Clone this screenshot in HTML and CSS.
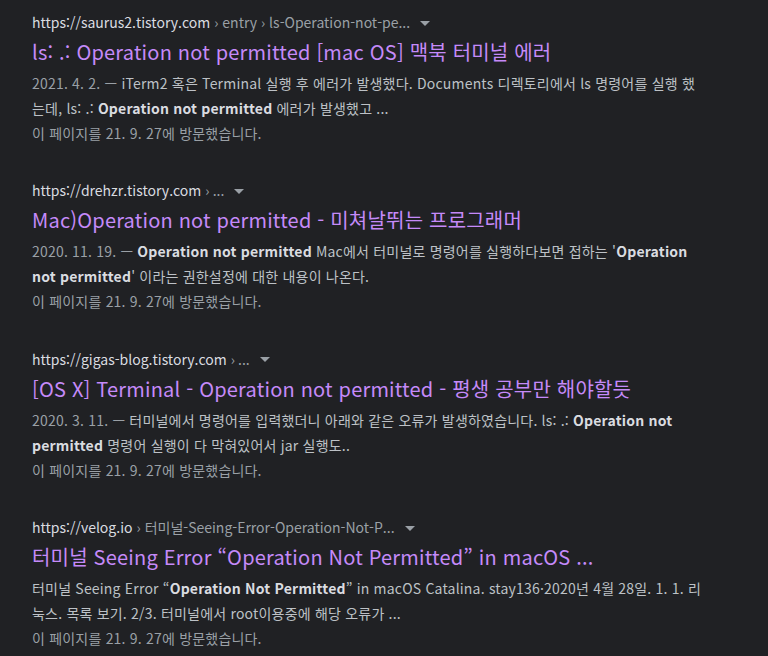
FILE: index.html
```html
<!DOCTYPE html>
<html lang="ko">
<head>
  <meta charset="UTF-8">
  <title>Operation not permitted - 검색 결과</title>
  <link rel="stylesheet" href="styles.css">
</head>
<body>
  <div class="results">

    <!-- 결과 1 -->
    <div class="result">
      <div class="cite">
        <span class="domain">https://saurus2.tistory.com</span>
        <span class="crumb">› entry › ls-Operation-not-pe...</span>
        <span class="caret"></span>
      </div>
      <a class="title" href="#">ls: .: Operation not permitted [mac OS] 맥북 터미널 에러</a>
      <div class="snippet">
        <span class="date">2021. 4. 2. — </span>iTerm2 혹은 Terminal 실행 후 에러가 발생했다. Documents 디렉토리에서 ls 명령어를 실행 했는데, ls: .: <b>Operation not permitted</b> 에러가 발생했고 ...
      </div>
      <div class="visited">이 페이지를 21. 9. 27에 방문했습니다.</div>
    </div>

    <!-- 결과 2 -->
    <div class="result">
      <div class="cite">
        <span class="domain">https://drehzr.tistory.com</span>
        <span class="crumb">› ...</span>
        <span class="caret"></span>
      </div>
      <a class="title" href="#">Mac)Operation not permitted - 미쳐날뛰는 프로그래머</a>
      <div class="snippet">
        <span class="date">2020. 11. 19. — </span><b>Operation not permitted</b> Mac에서 터미널로 명령어를 실행하다보면 접하는 '<b>Operation not permitted</b>' 이라는 권한설정에 대한 내용이 나온다.
      </div>
      <div class="visited">이 페이지를 21. 9. 27에 방문했습니다.</div>
    </div>

    <!-- 결과 3 -->
    <div class="result">
      <div class="cite">
        <span class="domain">https://gigas-blog.tistory.com</span>
        <span class="crumb">› ...</span>
        <span class="caret"></span>
      </div>
      <a class="title" href="#">[OS X] Terminal - Operation not permitted - 평생 공부만 해야할듯</a>
      <div class="snippet">
        <span class="date">2020. 3. 11. — </span>터미널에서 명령어를 입력했더니 아래와 같은 오류가 발생하였습니다. ls: .: <b>Operation not permitted</b> 명령어 실행이 다 막혀있어서 jar 실행도..
      </div>
      <div class="visited">이 페이지를 21. 9. 27에 방문했습니다.</div>
    </div>

    <!-- 결과 4 -->
    <div class="result">
      <div class="cite">
        <span class="domain">https://velog.io</span>
        <span class="crumb">› 터미널-Seeing-Error-Operation-Not-P...</span>
        <span class="caret"></span>
      </div>
      <a class="title" href="#">터미널 Seeing Error “Operation Not Permitted” in macOS ...</a>
      <div class="snippet">
        터미널 Seeing Error “<b>Operation Not Permitted</b>” in macOS Catalina. stay136·2020년 4월 28일. 1. 1. 리눅스. 목록 보기. 2/3. 터미널에서 root이용중에 해당 오류가 ...
      </div>
      <div class="visited">이 페이지를 21. 9. 27에 방문했습니다.</div>
    </div>

  </div>
</body>
</html>
```

FILE: styles.css
```css
body {
  margin: 0;
  padding: 0;
  background-color: #202124;
  font-family: "Noto Sans CJK KR", "Noto Sans", sans-serif;
  color: #bdc1c6;
}
.results {
  padding: 11px 0 0 32px;
  width: 676px;
}
.result {
  margin-bottom: 34.4px;
}
.cite {
  display: flex;
  align-items: center;
  font-size: 14px;
  line-height: 22px;
  white-space: nowrap;
}
.domain {
  color: #dadce0;
}
.crumb {
  color: #9aa0a6;
  margin-left: 4px;
}
.caret {
  width: 0;
  height: 0;
  margin-left: 10px;
  margin-top: 2px;
  border-left: 5px solid transparent;
  border-right: 5px solid transparent;
  border-top: 5px solid #9aa0a6;
}
.title {
  display: block;
  margin-top: 6px;
  font-size: 20px;
  line-height: 26px;
  letter-spacing: 0.2px;
  color: #c58af9;
  text-decoration: none;
}
.snippet {
  margin-top: 6px;
  font-size: 14px;
  line-height: 25px;
  letter-spacing: 0.2px;
}
.snippet b {
  color: #dadce0;
  font-weight: bold;
}
.date {
  color: #9aa0a6;
}
.visited {
  font-size: 14px;
  line-height: 24px;
  letter-spacing: 0.2px;
  color: #9aa0a6;
}
```
